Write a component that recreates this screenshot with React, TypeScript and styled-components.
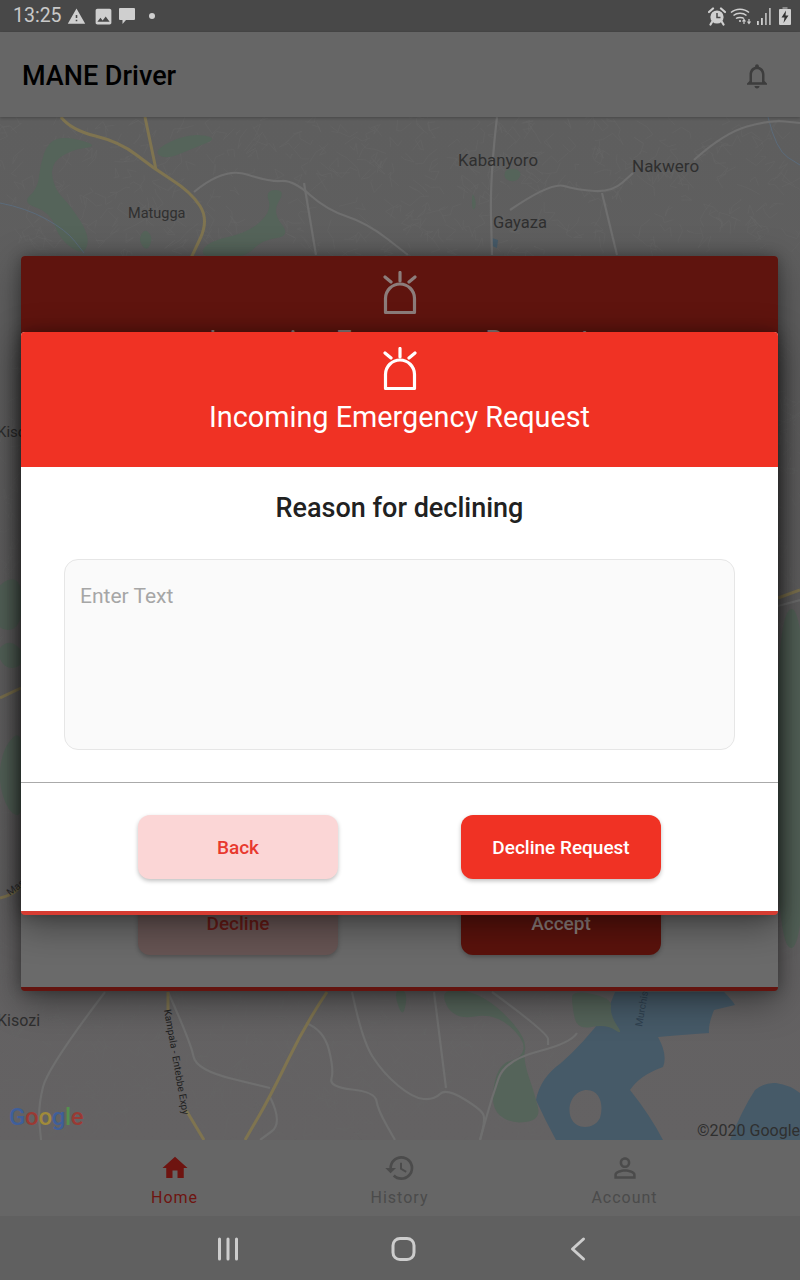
import React from "react";
import styled, { createGlobalStyle } from "styled-components";
import { MdHome, MdHistory, MdPersonOutline, MdNotificationsNone, MdWarning, MdImage } from "react-icons/md";

const Global = createGlobalStyle`
  html, body { margin: 0; padding: 0; background: #606060; }
  body { font-family: Roboto, "Liberation Sans", sans-serif; }
  * { box-sizing: border-box; }
`;

const Screen = styled.div`
  position: relative;
  width: 800px;
  height: 1280px;
  overflow: hidden;
  display: flex;
  flex-direction: column;
`;

const StatusBar = styled.div`
  height: 32px;
  flex: none;
  background: #484848;
  display: flex;
  align-items: center;
  justify-content: space-between;
  padding: 0 9px 0 13px;
  color: #cfcfcf;
`;
const StatusGroup = styled.div`
  display: flex;
  align-items: center;
`;
const StatusIcon = styled.span<{ $gap: number }>`
  display: flex;
  margin-left: ${p => p.$gap}px;
`;
const Time = styled.span`
  font-size: 19.5px;
  line-height: 32px;
  color: #c9c9c9;
`;
const Dot = styled.span`
  width: 6px;
  height: 6px;
  border-radius: 50%;
  background: #cfcfcf;
  margin-left: 13px;
`;

const AppBar = styled.div`
  height: 85px;
  flex: none;
  background: #666;
  display: flex;
  align-items: center;
  justify-content: space-between;
  padding: 2px 28px 0 22px;
  box-shadow: 0 1px 3px rgba(0,0,0,.25);
  position: relative;
  z-index: 1;
`;
const AppTitle = styled.h1`
  margin: 0;
  font-size: 27px;
  font-weight: 500;
  color: #000;
`;

const MapArea = styled.div`
  flex: 1;
  min-height: 0;
  background: linear-gradient(#5e5e5e, #646263);
`;
const MapSvg = styled.svg`
  display: block;
  width: 800px;
  height: 1023px;
`;

const BottomNav = styled.nav`
  height: 76px;
  flex: none;
  background: #666;
  display: grid;
  grid-template-columns: repeat(3, 225px);
  justify-content: center;
  padding-right: 1px;
`;
const NavItem = styled.div<{ $active?: boolean }>`
  display: flex;
  flex-direction: column;
  align-items: center;
  padding-top: 12px;
  color: ${p => (p.$active ? "#6e1410" : "#4b4b4b")};
  font-size: 16px;
  letter-spacing: 1px;
  line-height: 19px;
`;
const IconSlot = styled.div`
  height: 32px;
  margin-bottom: 4px;
  display: flex;
  align-items: center;
  justify-content: center;
  svg { display: block; }
`;

const SystemBar = styled.div`
  height: 64px;
  flex: none;
  background: #606060;
`;
const SystemSvg = styled.svg`
  display: block;
`;

const Dialog = styled.section<{ $top: number; $height: number; $back?: boolean }>`
  position: absolute;
  left: 21px;
  top: ${p => p.$top}px;
  width: 757px;
  height: ${p => p.$height}px;
  display: flex;
  flex-direction: column;
  border-radius: 4px;
  overflow: hidden;
  background: ${p => (p.$back ? "#6a6a6a" : "#fff")};
  border-bottom: 4px solid ${p => (p.$back ? "#63140f" : "#d63c32")};
  box-shadow: 0 10px 36px rgba(0,0,0,.42), 0 0 14px rgba(0,0,0,.28);
`;
const Header = styled.header<{ $back?: boolean }>`
  height: 135px;
  flex: none;
  background: ${p => (p.$back ? "#5f140e" : "#f03224")};
  color: ${p => (p.$back ? "#8c7d7b" : "#fff")};
  display: flex;
  flex-direction: column;
  align-items: center;
  padding-top: 15px;
`;
const HeaderTitle = styled.h2`
  margin: 7px 0 0;
  font-size: 28.8px;
  line-height: 36px;
  font-weight: 400;
`;
const Body = styled.div`
  flex: 1;
  padding: 0 43px;
  display: flex;
  flex-direction: column;
`;
const Question = styled.h3`
  margin: 0;
  height: 92px;
  padding-top: 22px;
  font-size: 27px;
  line-height: 38px;
  font-weight: 500;
  color: #212121;
  text-align: center;
`;
const TextArea = styled.div`
  height: 191px;
  background: #fafafa;
  border: 1px solid #e6e6e6;
  border-radius: 14px;
  padding: 23px 15px;
  font-size: 21px;
  line-height: 26px;
  color: #a6a6a6;
`;
const Footer = styled.footer<{ $divided?: boolean }>`
  height: 129px;
  flex: none;
  padding: 32px 117px;
  display: flex;
  justify-content: space-between;
  border-top: 1px solid ${p => (p.$divided ? "#aaaaaa" : "transparent")};
`;
const Btn = styled.div<{ $kind: "soft" | "solid" | "softDim" | "solidDim" }>`
  width: 200px;
  height: 64px;
  border-radius: 12px;
  display: flex;
  align-items: center;
  justify-content: center;
  font-size: 19px;
  font-weight: 500;
  box-shadow: 0 2px 4px rgba(0,0,0,.25);
  background: ${p => ({ soft: "#fbd6d6", solid: "#f03224", softDim: "#665453", solidDim: "#5a120c" }[p.$kind])};
  color: ${p => ({ soft: "#e8392e", solid: "#fff", softDim: "#651a16", solidDim: "#8c7d7b" }[p.$kind])};
`;

const Siren = () => (
  <svg width="36" height="45" viewBox="0 0 36 45" fill="none" stroke="currentColor" strokeWidth="3.2">
    <path d="M3.5 41.5 V27.5 a14.5 14.5 0 0 1 29 0 V41.5 Z" strokeLinejoin="round" />
    <path d="M18 1.5 V10 M3 6 L9 11 M33 6 L27 11" strokeLinecap="round" />
  </svg>
);

const Chat = () => (
  <svg width="18" height="18" viewBox="0 0 18 18" fill="currentColor">
    <path d="M2 1 H16 a1 1 0 0 1 1 1 V12 a1 1 0 0 1 -1 1 H8 L4.5 17 V13 H2 a1 1 0 0 1 -1 -1 V2 a1 1 0 0 1 1 -1z" />
  </svg>
);
const Alarm = () => (
  <svg width="18" height="19" viewBox="0 0 18 19">
    <circle cx="9" cy="10" r="6.6" fill="#cfcfcf" />
    <path d="M9 6 V10.5 H12.5" fill="none" stroke="#484848" strokeWidth="1.5" />
    <path d="M1 5 L5 1.5 M17 5 L13 1.5 M4 15 L2.5 17.5 M14 15 L15.5 17.5" stroke="#cfcfcf" strokeWidth="2.2" strokeLinecap="round" />
  </svg>
);
const Wifi = () => (
  <svg width="22" height="19" viewBox="0 0 22 19" fill="none" stroke="#cfcfcf" strokeWidth="1.5">
    <path d="M1 5.5 C6 1 14 1 19 5.5 M3.5 8.5 C7 5.5 13 5.5 16.5 8.5 M6 11.5 C8 10 12 10 14 11.5" />
    <circle cx="10" cy="14" r="1.1" fill="#cfcfcf" stroke="none" />
    <path d="M14 17 V12.5 M12.5 14.5 L14 12.5 L15.5 14.5 M19 12 V16.5 M17.5 14.5 L19 16.5 L20.5 14.5" strokeWidth="1.2" />
  </svg>
);
const Signal = () => (
  <svg width="15" height="18" viewBox="0 0 15 18" fill="#cfcfcf">
    <rect x="0" y="14" width="1.8" height="4" />
    <rect x="4" y="11" width="1.8" height="7" />
    <rect x="8" y="6" width="1.8" height="12" opacity=".8" />
    <rect x="12" y="1" width="1.8" height="17" opacity=".8" />
  </svg>
);
const Battery = () => (
  <svg width="12" height="18" viewBox="0 0 12 18">
    <rect x="3.5" y="0" width="5" height="3" fill="#8a8a8a" />
    <rect x="0" y="2" width="12" height="16" rx="1" fill="#cfcfcf" />
    <path d="M7 3.5 L2.5 10.5 H5.5 L4.5 16 L9.5 8.5 H6.5 Z" fill="#333" />
  </svg>
);

type Pt = number[];
// rounds a polyline through the midpoints of its segments
const smooth = (flat: Pt, close = false) => {
  const p: [number, number][] = [];
  for (let i = 0; i < flat.length; i += 2) p.push([flat[i], flat[i + 1]]);
  if (close) {
    const m = (a: number[], b: number[]) => `${(a[0] + b[0]) / 2} ${(a[1] + b[1]) / 2}`;
    let d = `M${m(p[p.length - 1], p[0])}`;
    p.forEach((q, i) => { d += ` Q${q[0]} ${q[1]} ${m(q, p[(i + 1) % p.length])}`; });
    return d + "Z";
  }
  let d = `M${p[0][0]} ${p[0][1]}`;
  for (let i = 1; i < p.length - 1; i++) {
    d += ` Q${p[i][0]} ${p[i][1]} ${(p[i][0] + p[i + 1][0]) / 2} ${(p[i][1] + p[i + 1][1]) / 2}`;
  }
  const last = p[p.length - 1];
  return d + ` L${last[0]} ${last[1]}`;
};

// faint web of minor streets, from a fixed seed so each run is the same
const minorStreets = (() => {
  let s = 12345;
  const r = () => { s = (s * 1103515245 + 12345) & 0x7fffffff; return s / 0x7fffffff; };
  let d = "";
  const regions = [[0, 117, 800, 140], [0, 992, 560, 148], [0, 340, 21, 650], [778, 340, 22, 650]];
  regions.forEach(([x, y, w, h]) => {
    const n = Math.round((w * h) / 260);
    for (let i = 0; i < n; i++) {
      let cx = x + r() * w, cy = y + r() * h;
      d += `M${cx.toFixed(1)} ${cy.toFixed(1)}`;
      for (let k = 0; k < 3; k++) {
        cx += (r() - 0.5) * 22; cy += (r() - 0.5) * 22;
        d += `L${cx.toFixed(1)} ${cy.toFixed(1)}`;
      }
    }
  });
  return d;
})();

const greens: Pt[] = [
  [66,136, 48,142, 40,165, 38,188, 22,203, 50,212, 60,240, 84,256, 90,236, 70,205, 55,190, 50,165, 70,150, 100,146],
  [153,150, 189,133, 219,138, 194,148, 165,160],
  [265,190, 286,190, 272,212, 291,236, 262,240, 245,258, 200,258, 206,242, 250,232, 272,210],
  [145,228, 153,238, 147,252, 138,240],
  [505,168, 522,170, 518,182, 504,180],
  [472,190, 477,205, 472,212],
  [-6,585, 22,575, 22,630, -6,630],
  [10,640, 24,652, 20,668, 4,668, -4,650],
  [24,728, 4,745, -2,780, 8,812, 24,818],
  [776,612, 806,606, 806,948, 776,948],
  [393,990, 403,1020, 408,990],
  [439,990, 454,1020, 495,1013, 525,1040, 522,1058, 498,1064, 490,1107, 510,1124, 541,1120, 535,1095, 523,1060, 527,1040, 500,1008, 470,990],
  [572,990, 612,998, 610,1015, 624,1036, 606,1024, 577,1030, 572,1005],
];
const roads: Pt[] = [
  [194,192, 224,167, 270,182, 293,180, 327,210, 367,223, 408,255],
  [304,183, 316,255],
  [497,117, 490,177, 492,255],
  [510,210, 551,182, 577,190, 612,192, 633,173],
  [602,193, 617,255],
  [694,160, 724,133, 770,120, 800,123],
  [105,992, 48,1067, 38,1107, 41,1140],
  [168,992, 191,1043, 196,1070, 270,1088],
  [270,1097, 283,1123, 260,1140],
  [352,992, 362,1040, 383,1073, 413,1098, 434,1100, 446,1088, 482,1110, 485,1120, 480,1140],
  [434,992, 446,1088],
  [306,1023, 324,1030, 334,1070, 329,1087, 375,1092, 378,1110, 395,1140],
  [492,992, 548,1033, 548,1045],
  [577,1033, 571,1043, 505,1060, 492,1097, 480,1140],
  [778,606, 800,600],
];
const highways: Pt[] = [
  [61,117, 71,130, 120,142, 153,168, 191,192, 209,220, 191,258],
  [145,117, 152,150, 156,170],
  [0,698, 21,688],
  [0,898, 12,895, 21,886],
  [778,598, 800,590],
  [168,992, 168,1010],
  [186,1110, 204,1140],
  [327,992, 306,1023, 270,1097, 245,1140],
];

const MapDrawing = () => (
  <MapSvg viewBox="0 117 800 1023">
    <path d={minorStreets} fill="none" stroke="#656565" strokeWidth=".6" />
    <g fill="#465a68">
      <path fillRule="evenodd" d="M615 992 L724 992 Q732 1000 735 1005 L714 1010 Q708 1025 709 1033 Q680 1035 658 1037 Q668 1055 663 1067 Q640 1075 630 1090 Q650 1115 663 1140 L556 1140 Q545 1120 536 1100 Q540 1078 561 1063 Q585 1042 607 1012 Z M587 1090 C600 1090 604 1105 600 1118 C594 1130 576 1130 571 1118 C566 1105 574 1090 587 1090 Z" />
      <path d="M730 1140 Q742 1110 755 1090 Q765 1082 776 1083 Q790 1085 800 1093 L800 1140 Z" />
      <path d="M492 238 L498 240 L497 248 L492 246 Z" />
    </g>
    <g fill="#55645a">
      {greens.map((g, i) => <path key={i} d={smooth(g, true)} />)}
    </g>
    <g fill="none" stroke="#5b6b7b" strokeWidth="1">
      <path d={smooth([0,203, 26,208, 66,230, 84,253])} />
      <path d={smooth([768,117, 776,150, 800,165])} />
    </g>
    <g fill="none" stroke="#6f6f6f" strokeWidth="2.2">
      {roads.map((g, i) => <path key={i} d={smooth(g)} />)}
    </g>
    <g fill="none" stroke="#7f7450" strokeWidth="3">
      {highways.map((g, i) => <path key={i} d={smooth(g)} />)}
    </g>
    <g fontFamily="Roboto, sans-serif" fill="#2f2f2f">
      <text x="458" y="166" fontSize="16.8">Kabanyoro</text>
      <text x="632" y="172" fontSize="17">Nakwero</text>
      <text x="128" y="218" fontSize="14.5">Matugga</text>
      <text x="493" y="228" fontSize="16.5">Gayaza</text>
      <text x="-3" y="437" fontSize="15">Kisozi</text>
      <text x="-3" y="1026" fontSize="16">Kisozi</text>
      <text x="164" y="1010" fontSize="10" transform="rotate(80 164 1010)" fill="#1f1f1f">Kampala - Entebbe Expy</text>
      <text x="10" y="896" fontSize="10" transform="rotate(-38 10 896)">Masaka</text>
      <text x="642" y="1027" fontSize="10" transform="rotate(-80 642 1027)" fill="#2f4150">Murchison</text>
      <text x="697" y="1136" fontSize="16">©2020 Google</text>
    </g>
    <text x="9" y="1125" fontFamily="Roboto, sans-serif" fontSize="24" fontWeight="500" letterSpacing="-.3"><tspan fill="#3f5f9a">G</tspan><tspan fill="#9a3a34">o</tspan><tspan fill="#a08a3a">o</tspan><tspan fill="#3f5f9a">g</tspan><tspan fill="#55904f">l</tspan><tspan fill="#9a3a34">e</tspan></text>
  </MapSvg>
);

export default function App() {
  return (
    <Screen>
      <Global />
      <StatusBar>
        <StatusGroup>
          <Time>13:25</Time>
          <StatusIcon $gap={5}><MdWarning size={19} /></StatusIcon>
          <StatusIcon $gap={7}><MdImage size={21} /></StatusIcon>
          <StatusIcon $gap={4}><Chat /></StatusIcon>
          <Dot />
        </StatusGroup>
        <StatusGroup>
          <Alarm />
          <StatusIcon $gap={4}><Wifi /></StatusIcon>
          <StatusIcon $gap={5}><Signal /></StatusIcon>
          <StatusIcon $gap={7}><Battery /></StatusIcon>
        </StatusGroup>
      </StatusBar>
      <AppBar>
        <AppTitle>MANE Driver</AppTitle>
        <MdNotificationsNone size={30} color="#3d3d3d" />
      </AppBar>
      <MapArea><MapDrawing /></MapArea>
      <BottomNav>
        <NavItem $active><IconSlot><MdHome size={30} /></IconSlot>Home</NavItem>
        <NavItem><IconSlot><MdHistory size={32} /></IconSlot>History</NavItem>
        <NavItem><IconSlot><MdPersonOutline size={32} /></IconSlot>Account</NavItem>
      </BottomNav>
      <SystemBar>
        <SystemSvg width="800" height="64" viewBox="0 1216 800 64" fill="none" stroke="#cdcdcd" strokeWidth="3">
          <path d="M219.5 1239 V1259 M228 1239 V1259 M236.5 1239 V1259" strokeLinecap="round" />
          <rect x="393" y="1238.5" width="21" height="21" rx="7" />
          <path d="M583.5 1239 L572.5 1249 L583.5 1259" strokeLinecap="round" strokeLinejoin="round" />
        </SystemSvg>
      </SystemBar>

      <Dialog $top={256} $height={735} $back>
        <Header $back><Siren /><HeaderTitle>Incoming Emergency Request</HeaderTitle></Header>
        <Body />
        <Footer>
          <Btn $kind="softDim">Decline</Btn>
          <Btn $kind="solidDim">Accept</Btn>
        </Footer>
      </Dialog>
      <Dialog $top={332} $height={583}>
        <Header><Siren /><HeaderTitle>Incoming Emergency Request</HeaderTitle></Header>
        <Body>
          <Question>Reason for declining</Question>
          <TextArea>Enter Text</TextArea>
        </Body>
        <Footer $divided>
          <Btn $kind="soft">Back</Btn>
          <Btn $kind="solid">Decline Request</Btn>
        </Footer>
      </Dialog>
    </Screen>
  );
}
